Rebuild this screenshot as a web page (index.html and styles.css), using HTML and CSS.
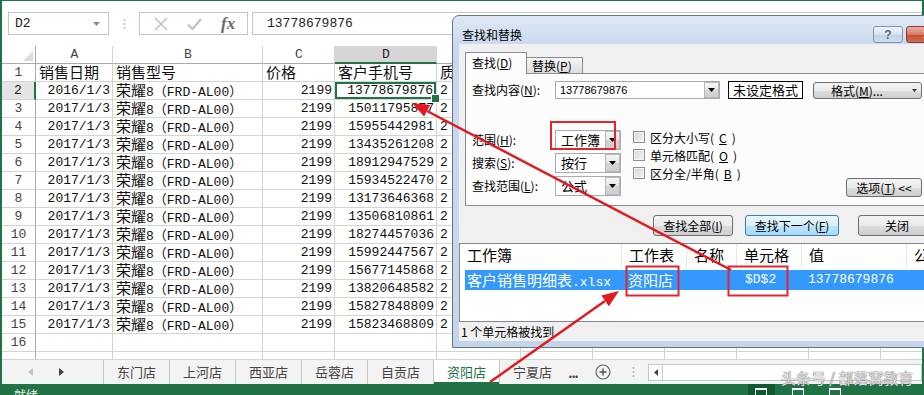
FILE: index.html
```html
<!DOCTYPE html>
<html lang="zh-CN">
<head>
<meta charset="utf-8">
<title>查找和替换</title>
<link rel="stylesheet" href="styles.css">
</head>
<body>
<div class="app">
  <div class="fbar">
    <div class="namebox"><span>D2</span><svg width="7" height="4" viewBox="0 0 7 4"><path d="M0 0h7L3.5 4z" fill="#8a8a8a"/></svg></div>
    <div class="vdots"><svg width="3" height="12" viewBox="0 0 3 12"><circle cx="1.5" cy="2" r="1" fill="#b8b8b8"/><circle cx="1.5" cy="6" r="1" fill="#b8b8b8"/><circle cx="1.5" cy="10" r="1" fill="#b8b8b8"/></svg></div>
    <div class="fxbox">
      <svg width="14" height="14" viewBox="0 0 14 14"><path d="M1 1L13 13M13 1L1 13" stroke="#c4c4c4" stroke-width="1.6"/></svg>
      <svg width="15" height="12" viewBox="0 0 15 12"><path d="M1 6.5L5.5 11L14 1" stroke="#c4c4c4" stroke-width="2.4" fill="none"/></svg>
      <span class="fx">fx</span>
    </div>
    <div class="finput">13778679876</div>
  </div>

  <div class="sheet">
    <div class="c corner"><svg width="10" height="10" viewBox="0 0 10 10"><path d="M10 0V10H0z" fill="#dcdcdc"/></svg></div><div class="c hd">A</div><div class="c hd">B</div><div class="c hd">C</div><div class="c hd hsel">D</div><div class="c hd">E</div><div class="c hd rest"></div>

    <div class="c rh">1</div><div class="c"><span class="z">销售日期</span></div><div class="c"><span class="z">销售型号</span></div><div class="c"><span class="z">价格</span></div><div class="c"><span class="z">客户手机号</span></div><div class="c"><span class="z">质</span></div><div class="c rest"></div>
    <div class="c rh rsel">2</div><div class="c r">2016/1/3</div><div class="c"><span class="z">荣耀</span>8（FRD-AL00）</div><div class="c r">2199</div><div class="c r sel">13778679876</div><div class="c">2</div><div class="c rest"></div>
    <div class="c rh">3</div><div class="c r">2017/1/3</div><div class="c"><span class="z">荣耀</span>8（FRD-AL00）</div><div class="c r">2199</div><div class="c r">15011795877</div><div class="c">2</div><div class="c rest"></div>
    <div class="c rh">4</div><div class="c r">2017/1/3</div><div class="c"><span class="z">荣耀</span>8（FRD-AL00）</div><div class="c r">2199</div><div class="c r">15955442981</div><div class="c">2</div><div class="c rest"></div>
    <div class="c rh">5</div><div class="c r">2017/1/3</div><div class="c"><span class="z">荣耀</span>8（FRD-AL00）</div><div class="c r">2199</div><div class="c r">13435261208</div><div class="c">2</div><div class="c rest"></div>
    <div class="c rh">6</div><div class="c r">2017/1/3</div><div class="c"><span class="z">荣耀</span>8（FRD-AL00）</div><div class="c r">2199</div><div class="c r">18912947529</div><div class="c">2</div><div class="c rest"></div>
    <div class="c rh">7</div><div class="c r">2017/1/3</div><div class="c"><span class="z">荣耀</span>8（FRD-AL00）</div><div class="c r">2199</div><div class="c r">15934522470</div><div class="c">2</div><div class="c rest"></div>
    <div class="c rh">8</div><div class="c r">2017/1/3</div><div class="c"><span class="z">荣耀</span>8（FRD-AL00）</div><div class="c r">2199</div><div class="c r">13173646368</div><div class="c">2</div><div class="c rest"></div>
    <div class="c rh">9</div><div class="c r">2017/1/3</div><div class="c"><span class="z">荣耀</span>8（FRD-AL00）</div><div class="c r">2199</div><div class="c r">13506810861</div><div class="c">2</div><div class="c rest"></div>
    <div class="c rh">10</div><div class="c r">2017/1/3</div><div class="c"><span class="z">荣耀</span>8（FRD-AL00）</div><div class="c r">2199</div><div class="c r">18274457036</div><div class="c">2</div><div class="c rest"></div>
    <div class="c rh">11</div><div class="c r">2017/1/3</div><div class="c"><span class="z">荣耀</span>8（FRD-AL00）</div><div class="c r">2199</div><div class="c r">15992447567</div><div class="c">2</div><div class="c rest"></div>
    <div class="c rh">12</div><div class="c r">2017/1/3</div><div class="c"><span class="z">荣耀</span>8（FRD-AL00）</div><div class="c r">2199</div><div class="c r">15677145868</div><div class="c">2</div><div class="c rest"></div>
    <div class="c rh">13</div><div class="c r">2017/1/3</div><div class="c"><span class="z">荣耀</span>8（FRD-AL00）</div><div class="c r">2199</div><div class="c r">13820648582</div><div class="c">2</div><div class="c rest"></div>
    <div class="c rh">14</div><div class="c r">2017/1/3</div><div class="c"><span class="z">荣耀</span>8（FRD-AL00）</div><div class="c r">2199</div><div class="c r">15827848809</div><div class="c">2</div><div class="c rest"></div>
    <div class="c rh">15</div><div class="c r">2017/1/3</div><div class="c"><span class="z">荣耀</span>8（FRD-AL00）</div><div class="c r">2199</div><div class="c r">15823468809</div><div class="c">2</div><div class="c rest"></div>
    <div class="c rh">16</div><div class="c"></div><div class="c"></div><div class="c"></div><div class="c"></div><div class="c"></div><div class="c rest"></div>
    <div class="c rh"></div><div class="c"></div><div class="c"></div><div class="c"></div><div class="c"></div><div class="c"></div><div class="c rest"></div>
  </div>

  <div class="tabbar">
    <div class="nav">
      <svg width="5" height="8" viewBox="0 0 5 8"><path d="M5 0V8L0 4z" fill="#c2c2c2"/></svg>
      <svg width="5" height="8" viewBox="0 0 5 8"><path d="M0 0V8L5 4z" fill="#444"/></svg>
    </div>
    <div class="tab">东门店</div>
    <div class="tab">上河店</div>
    <div class="tab">西亚店</div>
    <div class="tab">岳蓉店</div>
    <div class="tab">自贡店</div>
    <div class="tab active">资阳店</div>
    <div class="tab next">宁夏店</div>
    <div class="more">...</div>
    <div class="add"><svg width="16" height="16" viewBox="0 0 16 16"><circle cx="8" cy="8" r="7" fill="none" stroke="#666" stroke-width="1.2"/><path d="M8 4.5V11.5M4.5 8H11.5" stroke="#555" stroke-width="1.5"/></svg></div>
    <div class="tdots"><svg width="3" height="12" viewBox="0 0 3 12"><circle cx="1.5" cy="2" r="1" fill="#b0b0b0"/><circle cx="1.5" cy="6" r="1" fill="#b0b0b0"/><circle cx="1.5" cy="10" r="1" fill="#b0b0b0"/></svg></div>
    <div class="hscroll"><div class="hbtn"><svg width="4" height="7" viewBox="0 0 4 7"><path d="M4 0V7L0 3.5z" fill="#444"/></svg></div></div>
  </div>

  <div class="status">
    <span class="ready">就绪</span>
    <div class="views">
      <i class="v on"><b></b></i><i class="v"><b></b></i><i class="v"><b></b></i>
    </div>
  </div>
</div>

<div class="dialog">
  <div class="dtitle">
    <span class="t">查找和替换</span>
    <div class="tbtns">
      <div class="hbtn2">?</div>
      <div class="xbtn"><svg width="10" height="9" viewBox="0 0 10 9"><path d="M1 1L9 8M9 1L1 8" stroke="#fff" stroke-width="2"/></svg></div>
    </div>
  </div>
  <div class="client">
    <div class="dtabs">
      <div class="dtab on">查找(<u>D</u>)</div>
      <div class="dtab">替换(<u>P</u>)</div>
    </div>
    <div class="panel">
      <div class="findrow">
        <span class="lbl">查找内容(<u>N</u>):</span>
        <div class="input"><span class="inval">13778679876</span><i class="dd"><svg width="7" height="4" viewBox="0 0 7 4"><path d="M0 0h7L3.5 4z" fill="#000"/></svg></i></div>
        <div class="nofmt">未设定格式</div>
        <div class="btn fmt"><span>格式(<u>M</u>)...</span><svg width="5" height="3" viewBox="0 0 5 3"><path d="M0 0h5L2.5 3z" fill="#333"/></svg></div>
      </div>
      <div class="opts">
        <div class="ocol">
          <div class="orow"><span class="lbl">范围(<u>H</u>):</span><div class="combo"><span>工作簿</span><i class="dd"><svg width="7" height="4" viewBox="0 0 7 4"><path d="M0 0h7L3.5 4z" fill="#000"/></svg></i></div></div>
          <div class="orow"><span class="lbl">搜索(<u>S</u>):</span><div class="combo"><span>按行</span><i class="dd"><svg width="7" height="4" viewBox="0 0 7 4"><path d="M0 0h7L3.5 4z" fill="#000"/></svg></i></div></div>
          <div class="orow"><span class="lbl">查找范围(<u>L</u>):</span><div class="combo"><span>公式</span><i class="dd"><svg width="7" height="4" viewBox="0 0 7 4"><path d="M0 0h7L3.5 4z" fill="#000"/></svg></i></div></div>
        </div>
        <div class="checks">
          <div class="chk"><i class="box"></i>区分大小写(<u>C</u>)</div>
          <div class="chk"><i class="box"></i>单元格匹配(<u>O</u>)</div>
          <div class="chk"><i class="box"></i>区分全/半角(<u>B</u>)</div>
        </div>
        <div class="btn opt">选项(<u>T</u>) &lt;&lt;</div>
      </div>
    </div>
    <div class="brow">
      <div class="btn b1">查找全部(<u>I</u>)</div>
      <div class="btn b2">查找下一个(<u>F</u>)</div>
      <div class="btn b3">关闭</div>
    </div>
    <div class="list">
      <div class="lhead"><span>工作簿</span><span>工作表</span><span>名称</span><span>单元格</span><span>值</span><span>公式</span></div>
      <div class="lrow"><span class="p1">客户销售明细表<i class="m">.xlsx</i></span><span class="p2">资阳店</span><span></span><span class="p4 m">$D$2</span><span class="p5 m">13778679876</span><span></span></div>
    </div>
    <div class="dstatus">1 个单元格被找到</div>
  </div>
</div>

<svg class="annot" width="924" height="395" viewBox="0 0 924 395">
  <rect x="551" y="122" width="64" height="27" fill="none" stroke="#e2262c" stroke-width="2"/>
  <rect x="626.5" y="266.5" width="52" height="29" fill="none" stroke="#e2262c" stroke-width="2"/>
  <rect x="728.5" y="266.5" width="59" height="29" fill="none" stroke="#e2262c" stroke-width="2"/>
  <line x1="731" y1="270" x2="427" y2="111" stroke="#e3191f" stroke-width="2.4"/>
  <polygon points="412,103 430.1,105.1 424.1,116.6" fill="#e3191f"/>
  <line x1="490" y1="382" x2="605" y2="301" stroke="#e3191f" stroke-width="2.4"/>
  <polygon points="619,291 608.9,306.2 601.4,295.6" fill="#e3191f"/>
</svg>

<div class="watermark">头条号 / 部落窝教育</div>
</body>
</html>
```

FILE: styles.css
```css
* { box-sizing: border-box; }
html, body { margin: 0; padding: 0; }
body {
  width: 924px;
  height: 395px;
  overflow: hidden;
  position: relative;
  background: #fff;
  font-family: "Noto Sans CJK SC", sans-serif;
}

/* ---------- Excel window ---------- */
.app {
  width: 924px;
  height: 395px;
  border-style: solid;
  border-color: #217346;
  border-width: 1px 2px 0 2px;
  display: flex;
  flex-direction: column;
}

.fbar {
  flex: none;
  height: 45px;
  display: flex;
  align-items: flex-start;
  padding-top: 11px;
}
.namebox {
  margin-left: 6px;
  width: 101px;
  height: 23px;
  border: 1px solid #c6c6c6;
  display: flex;
  align-items: center;
  justify-content: space-between;
  padding: 0 8px 0 6px;
  font: 13px "Liberation Mono", monospace;
  color: #222;
}
.vdots {
  margin-left: 13px;
  width: 4px;
  height: 23px;
  display: flex;
  align-items: center;
  justify-content: center;
}
.fxbox {
  margin-left: 13px;
  width: 109px;
  height: 23px;
  border: 1px solid #c6c6c6;
  display: flex;
  align-items: center;
  padding-left: 14px;
  gap: 19px;
}
.fx {
  font: italic bold 17px "Liberation Serif", serif;
  color: #6a6a6a;
  line-height: 20px;
}
.finput {
  margin-left: 4px;
  flex: 1;
  height: 23px;
  border: 1px solid #c6c6c6;
  padding-left: 14px;
  font: 13px/21px "Liberation Mono", monospace;
  color: #222;
}

/* grid */
.sheet {
  flex: none;
  height: 313px;
  overflow: hidden;
  display: grid;
  grid-template-columns: 34px 77px 150px 72px 102px 84px 1fr;
  grid-auto-rows: 18px;
  font: 13px/17px "Liberation Mono", "Noto Sans CJK SC", monospace;
  color: #111;
}
.c {
  border-right: 1px solid #d4d4d4;
  border-bottom: 1px solid #d4d4d4;
  padding: 0 2px 0 3px;
  white-space: nowrap;
  overflow-x: clip;
  overflow-y: visible;
}
.z {
  font-family: "Noto Sans CJK SC", sans-serif;
  font-size: 15px;
  line-height: 15px;
}
.r { text-align: right; }
.corner {
  display: flex;
  align-items: flex-end;
  justify-content: flex-end;
  padding: 0 2px 2px 0;
  border-right-color: #ababab;
  border-bottom-color: #ababab;
}
.hd {
  text-align: center;
  color: #444;
  border-bottom-color: #ababab;
}
.rh {
  text-align: center;
  color: #444;
  padding: 0;
  border-right-color: #ababab;
}
.hsel {
  background: #d6d6d6;
  border-bottom: 2px solid #217346;
  color: #222;
}
.rsel {
  background: #e4e4e4;
  border-right: 2px solid #217346;
  color: #222;
}
.rest {
  border-right: none;
  background-image: repeating-linear-gradient(to right, transparent 0 71px, #d4d4d4 71px 72px);
}
.sel {
  position: relative;
  overflow: visible;
  box-shadow: inset 0 0 0 2px #217346;
  padding-right: 3px;
}
.sel::after {
  content: "";
  position: absolute;
  right: -4px;
  bottom: -4px;
  width: 7px;
  height: 7px;
  background: #217346;
  border: 1px solid #fff;
}

/* sheet tabs */
.tabbar {
  flex: none;
  height: 25px;
  background: #f3f3f3;
  border-top: 1px solid #d4d4d4;
  display: flex;
  align-items: stretch;
  font-size: 13px;
  color: #444;
}
.nav {
  width: 101px;
  display: flex;
  align-items: center;
  padding-left: 26px;
  gap: 26px;
}
.tab {
  width: 66px;
  border-left: 1px solid #c6c6c6;
  display: flex;
  align-items: center;
  justify-content: center;
  line-height: 18px;
}
.tab.active {
  width: 67px;
  background: #fff;
  color: #217346;
  border-right: 1px solid #c6c6c6;
  box-shadow: inset 0 -2px 0 #217346;
}
.tab.next {
  width: 65px;
  border-left: none;
}
.more {
  width: 16px;
  display: flex;
  align-items: center;
  justify-content: center;
  font-weight: bold;
  color: #444;
  letter-spacing: -1px;
}
.add {
  margin-left: 14px;
  display: flex;
  align-items: center;
}
.tdots {
  margin-left: 21px;
  display: flex;
  align-items: center;
}
.hscroll {
  margin-left: 13px;
  flex: 1;
  align-self: center;
  height: 17px;
  border: 1px solid #c6c6c6;
  background: #fff;
  display: flex;
}
.hbtn {
  width: 14px;
  border-right: 1px solid #d0d0d0;
  display: flex;
  align-items: center;
  justify-content: center;
}

/* status bar */
.status {
  flex: 1;
  background: #217346;
  display: flex;
  overflow: hidden;
}
.ready {
  margin: 4px 0 0 12px;
  font-size: 12px;
  line-height: 14px;
  color: #e8f1ec;
}
.views {
  margin-left: auto;
  margin-right: 64px;
  width: 110px;
  display: flex;
}
.v {
  width: 30px;
  height: 11px;
  display: flex;
  justify-content: center;
  padding-top: 4px;
  margin-right: 10px;
}
.v.on { background: #0f5a31; }
.v b {
  width: 12px;
  height: 10px;
  border: 1px solid #fff;
  border-top-width: 2px;
}

/* ---------- dialog ---------- */
.dialog {
  position: absolute;
  left: 452px;
  top: 15px;
  width: 492px;
  height: 333px;
  border: 1px solid #65768c;
  border-radius: 7px 7px 0 0;
  background: linear-gradient(#dfe9f5, #c9d9ed 30px, #c4d5ea);
  padding: 0 6px 6px 6px;
  display: flex;
  flex-direction: column;
  font-size: 12px;
  color: #000;
  z-index: 2;
}
.dtitle {
  flex: none;
  height: 28px;
  display: flex;
  align-items: flex-start;
  padding-left: 3px;
}
.dtitle .t {
  margin-top: 11px;
  line-height: 16px;
  font-size: 12px;
}
.tbtns {
  margin-left: auto;
  margin-right: -12px;
  margin-top: 10px;
  display: flex;
  gap: 3px;
}
.hbtn2 {
  width: 30px;
  height: 17px;
  border: 1px solid #7f95b3;
  border-radius: 3px;
  background: linear-gradient(#f1f5fb, #d6e1ef 50%, #c2d2e7 51%, #cfdcee);
  display: flex;
  align-items: center;
  justify-content: center;
  font: bold 12px "Liberation Sans", sans-serif;
  color: #5c6d84;
}
.xbtn {
  width: 43px;
  height: 17px;
  border: 1px solid #8a3b32;
  border-radius: 3px;
  background: linear-gradient(#eab0a2, #d67b66 50%, #c44f38 51%, #d36a4e);
  display: flex;
  align-items: center;
  justify-content: center;
}

.client {
  flex: 1;
  background: #f0f0f0;
  display: flex;
  flex-direction: column;
}
.dtabs {
  flex: none;
  margin: 8px 0 0 6px;
  height: 21px;
  display: flex;
  align-items: flex-end;
}
.dtab {
  width: 56px;
  height: 16px;
  border: 1px solid #898c95;
  border-left: none;
  border-bottom: none;
  background: linear-gradient(#f4f4f4, #dedede);
  padding-left: 5px;
  line-height: 15px;
}
.dtab.on {
  width: 62px;
  height: 22px;
  margin-bottom: -1px;
  border-left: 1px solid #898c95;
  background: #fcfcfc;
  position: relative;
  z-index: 1;
  padding-left: 6px;
  line-height: 20px;
}
.panel {
  flex: none;
  margin: 0 6px;
  height: 133px;
  border: 1px solid #898c95;
  background: #fcfcfc;
  padding: 7px 8px 0 6px;
}
.findrow {
  display: flex;
  align-items: center;
  height: 18px;
}
.lbl {
  width: 83px;
  flex: none;
  line-height: 16px;
}
.input {
  width: 165px;
  height: 18px;
  border: 1px solid #a5acb5;
  background: #fff;
  display: flex;
  align-items: center;
}
.inval {
  flex: 1;
  padding-left: 4px;
  font: 11px "Liberation Sans", sans-serif;
}
.dd {
  width: 15px;
  height: 16px;
  border: 1px solid #b9b9b9;
  background: linear-gradient(#f7f7f7, #e6e6e6 50%, #d4d4d4 51%, #cfcfcf);
  display: flex;
  align-items: center;
  justify-content: center;
}
.nofmt {
  margin-left: 8px;
  width: 75px;
  height: 18px;
  border: 1px solid #000;
  background: #fff;
  text-align: center;
  font-size: 13px;
  line-height: 16px;
}
.btn {
  border: 1px solid #707070;
  border-radius: 3px;
  background: linear-gradient(#f2f2f2, #ebebeb 50%, #dddddd 51%, #cfcfcf);
  display: flex;
  align-items: center;
  justify-content: center;
  line-height: 15px;
  flex: none;
}
.fmt {
  margin-left: 10px;
  width: 109px;
  height: 17px;
  justify-content: space-between;
  padding: 0 4px 0 17px;
}
.opts {
  margin-top: 31px;
  height: 67px;
  display: flex;
  align-items: flex-start;
}
.ocol {
  display: flex;
  flex-direction: column;
  gap: 3px;
}
.orow {
  display: flex;
  align-items: center;
  height: 20px;
}
.combo {
  width: 66px;
  height: 20px;
  border: 1px solid #a5acb5;
  background: #fff;
  display: flex;
  align-items: center;
}
.combo span {
  flex: 1;
  padding-left: 5px;
  font-size: 13px;
  line-height: 16px;
}
.combo .dd { height: 18px; }
.checks {
  margin: -2px 0 0 12px;
  display: flex;
  flex-direction: column;
}
.chk {
  display: flex;
  align-items: center;
  height: 18px;
  gap: 5px;
}
.box {
  width: 12px;
  height: 12px;
  border: 1px solid #8f8f8f;
  background: linear-gradient(135deg, #d4d4d4, #f6f6f6);
  box-shadow: inset 0 0 0 1px #f4f4f4;
}
.opt {
  margin-left: auto;
  align-self: flex-end;
  width: 76px;
  height: 19px;
}
.brow {
  flex: none;
  margin-top: 9px;
  height: 21px;
  display: flex;
  padding-left: 194px;
}
.brow .btn { height: 21px; }
.b1 { width: 80px; }
.b2 {
  width: 94px;
  margin-left: 12px;
  border-color: #3c7fb1;
  background: linear-gradient(#eaf6fd, #d9f0fc 50%, #bee6fd 51%, #a7d9f5);
}
.b3 {
  width: 78px;
  margin-left: 19px;
}
.list {
  flex: none;
  margin-top: 7px;
  height: 79px;
  border: 1px solid #828790;
  background: #fff;
}
.lhead {
  display: grid;
  grid-template-columns: 162px 65px 50px 65px 105px 1fr;
  height: 24px;
  font-size: 15px;
  line-height: 22px;
}
.lhead span {
  padding-left: 7px;
  border-right: 1px solid #e7e7e7;
  white-space: nowrap;
}
.lrow {
  margin: 2px 0 0 5px;
  height: 20px;
  background: #3399ff;
  color: #fff;
  display: grid;
  grid-template-columns: 157px 65px 50px 65px 105px 1fr;
  font-size: 15px;
  line-height: 20px;
  white-space: nowrap;
}
.m {
  font: normal 13px "Liberation Mono", monospace;
}
.p1 { padding-left: 2px; }
.p2 { padding-left: 6px; }
.p4 { padding-left: 8px; line-height: 20px; }
.p5 { padding-left: 6px; line-height: 20px; }
.dstatus {
  flex: none;
  height: 19px;
  padding-left: 2px;
  line-height: 19px;
  font-size: 12px;
}

/* annotations */
.annot {
  position: absolute;
  left: 0;
  top: 0;
  z-index: 5;
  pointer-events: none;
}
.watermark {
  position: absolute;
  left: 781px;
  top: 369px;
  z-index: 6;
  font-size: 15px;
  line-height: 18px;
  color: rgba(255, 255, 255, 0.8);
  text-shadow: 0 0 1px #666, 0 0 1px #666;
  white-space: nowrap;
}
```
